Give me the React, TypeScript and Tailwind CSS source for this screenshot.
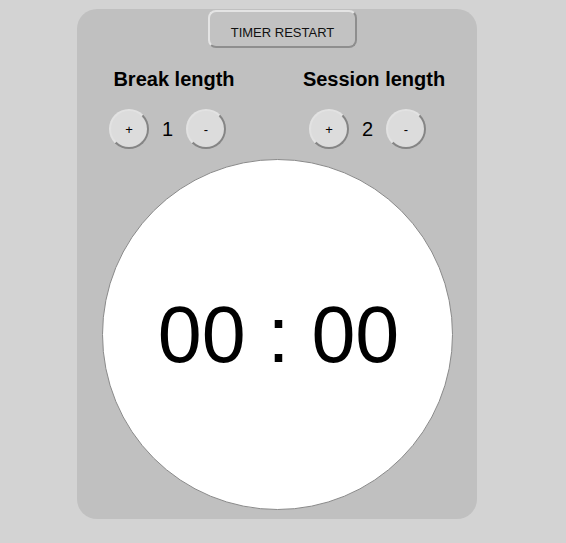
import React from 'react';

interface LengthControlProps {
  label: string;
  value: number;
}

const RoundButton: React.FC<{ children: React.ReactNode }> = ({ children }) => (
  <button className="flex h-10 w-10 items-center justify-center rounded-full border-2 border-t-[#e2e2e2] border-l-[#e2e2e2] border-r-[#858585] border-b-[#858585] bg-[#dcdcdc] text-[13px] leading-none text-black">
    {children}
  </button>
);

const LengthControl: React.FC<LengthControlProps> = ({ label, value }) => (
  <div className="flex flex-col items-center">
    <h2 className="text-[20px] font-bold leading-[23px] text-black">{label}</h2>
    <div className="mt-[18px] flex items-center pr-[13px]">
      <RoundButton>+</RoundButton>
      <span className="mx-[13px] w-[11px] text-center text-[20px] leading-none text-black">{value}</span>
      <RoundButton>-</RoundButton>
    </div>
  </div>
);

export default function App() {
  return (
    <div className="min-h-[543px] bg-[#d3d3d3] pt-[9px] font-['Liberation_Sans',Arial,sans-serif]">
      <div className="ml-[77px] flex h-[510px] w-[400px] flex-col items-center rounded-[20px] bg-[#c0c0c0]">
        <button className="ml-[11px] mt-px h-[38px] w-[149px] rounded-[8px] border-2 border-t-[#e4e4e4] border-l-[#e4e4e4] border-r-[#8e8e8e] border-b-[#8e8e8e] bg-[#c2c2c2] pt-[7px] text-[13px] text-[#111]">
          TIMER RESTART
        </button>
        <div className="mt-[20px] grid w-full grid-cols-2 -translate-x-[3px]">
          <LengthControl label="Break length" value={1} />
          <LengthControl label="Session length" value={2} />
        </div>
        <div className="mt-[10px] flex h-[351px] w-[351px] items-center justify-center rounded-full border border-[#8a8a8a] bg-white">
          <span className="ml-[3px] text-[79px] leading-none text-black">00 : 00</span>
        </div>
      </div>
    </div>
  );
}
